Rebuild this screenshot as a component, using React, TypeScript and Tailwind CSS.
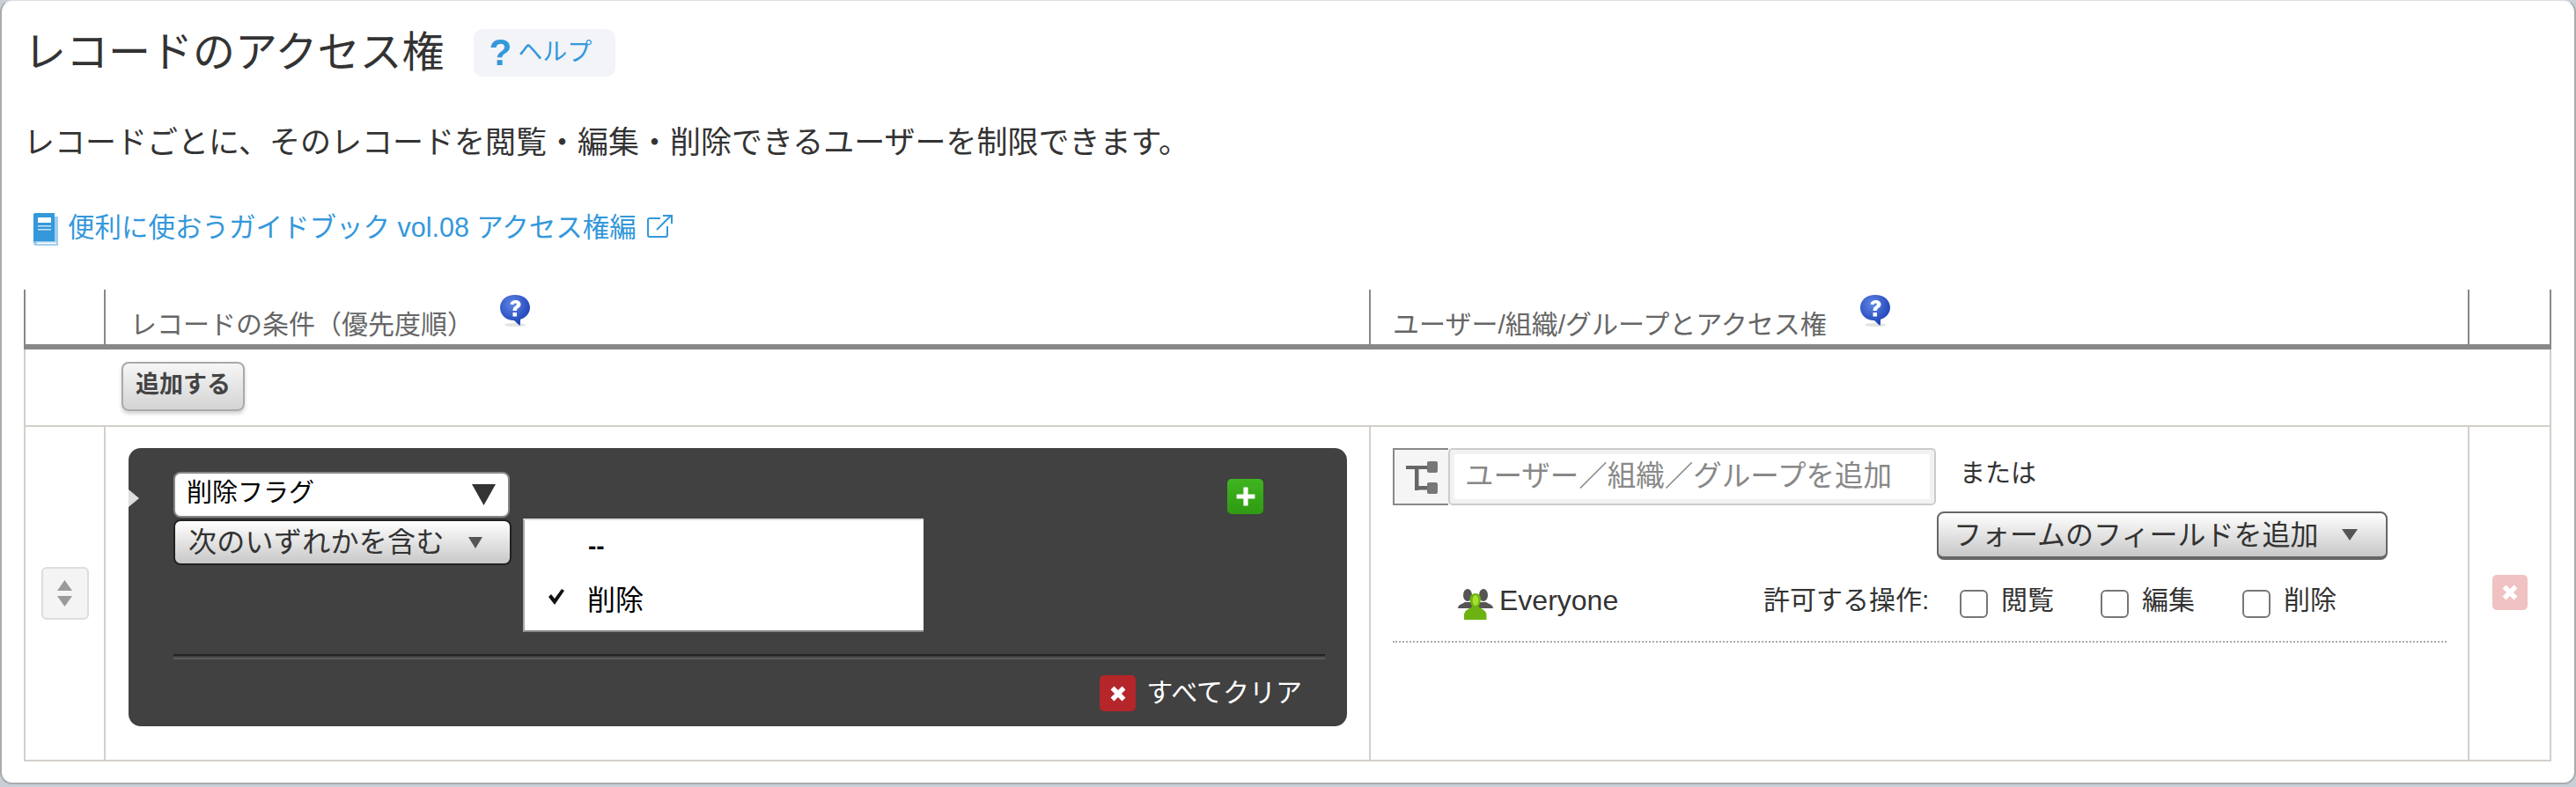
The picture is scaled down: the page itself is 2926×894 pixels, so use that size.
import type { ReactNode } from 'react'

const HelpBubble = ({ className }: { className: string }) => (
	<svg viewBox="0 0 36 38" className={className}>
		<defs>
			<radialGradient id="bubble" cx="40%" cy="30%" r="70%">
				<stop offset="0%" stopColor="#5f86e6" />
				<stop offset="100%" stopColor="#1b3fb4" />
			</radialGradient>
		</defs>
		<ellipse cx="18" cy="35" rx="12" ry="2" fill="#e4e4e4" />
		<path
			d="M18 1C8 1 1 7 1 15.500S8 30 17 30c2 2 4 4 6.500 6 .5-2 .8-5 .5-7 6-2 11-7 11-13.500C35 7 28 1 18 1z"
			fill="url(#bubble)"
		/>
		<path
			d="M12.500 11.500c.5-3 3-4.500 6-4.500 3.500 0 6 2 6 4.800 0 2.200-1.200 3.300-2.800 4.300-1.200.8-1.700 1.400-1.700 2.900h-4.500c0-2.800.8-4 2.500-5.200 1.200-.8 1.800-1.300 1.800-2 0-.8-.7-1.300-1.600-1.300-1 0-1.700.6-1.900 1.700z"
			fill="#fff"
		/>
		<rect x="15.500" y="21" width="4.500" height="4.500" fill="#fff" />
	</svg>
)

const BookIcon = () => (
	<svg viewBox="0 0 28 37" className="h-[37px] w-[28px] shrink-0">
		<path d="M24 4h4v33H3a3 3 0 0 1-3-3v-2h24z" fill="#9fcdee" />
		<path d="M2 0h22v32H2a2 2 0 0 0-2 2V2a2 2 0 0 1 2-2z" fill="#3498db" />
		<rect x="4" y="33.500" width="22" height="1.500" fill="#fff" />
		<rect x="5" y="5" width="15" height="6" fill="#fff" />
		<rect x="5" y="14" width="15" height="1.500" fill="#cfe5f6" />
		<rect x="5" y="18" width="15" height="1.500" fill="#cfe5f6" />
	</svg>
)

const ExternalIcon = () => (
	<svg
		viewBox="0 0 29 26"
		fill="none"
		stroke="#3498db"
		strokeWidth="2"
		className="mb-[6px] ml-[12px] h-[26px] w-[29px] shrink-0"
	>
		<path d="M15 4H3a2 2 0 0 0-2 2v17a2 2 0 0 0 2 2h18a2 2 0 0 0 2-2V13" />
		<path d="M11 17L27 1M18 1h10v9" />
	</svg>
)

const TreeIcon = () => (
	<svg viewBox="0 0 36 38" className="h-[38px] w-[36px]">
		<g fill="#666">
			<rect x="0" y="6" width="28" height="4" />
			<rect x="10" y="6" width="4.500" height="28" />
			<rect x="10" y="29" width="20" height="4.500" />
			<rect x="24" y="1" width="12" height="13" rx="2" fill="#777" />
			<rect x="24" y="25" width="12" height="13" rx="2" fill="#777" />
		</g>
	</svg>
)

const PeopleIcon = () => (
	<svg viewBox="0 0 40 36" className="h-[36px] w-[40px] shrink-0">
		<g fill="#555">
			<ellipse cx="11" cy="8" rx="5" ry="7" />
			<ellipse cx="29" cy="8" rx="5" ry="7" />
			<path d="M0 23c0-4 5-5 8-7h6c3 2 6 3 6 7z" />
			<path d="M20 23c0-4 3-5 6-7h6c3 2 8 3 8 7z" />
		</g>
		<path
			d="M20 6c4 0 6 3 6 7 0 4-2 6-2.500 8 1 2 8 3 9 9v6H7v-6c1-6 8-7 9-9-.5-2-2.500-4-2.500-8 0-4 2.500-7 6.500-7z"
			fill="#6cb312"
		/>
		<ellipse cx="20" cy="14" rx="3.500" ry="6" fill="#a5e02e" />
	</svg>
)

const CrossGlyph = () => (
	<svg viewBox="0 0 20 20" className="h-[26px] w-[26px]">
		<path
			d="M3.500 6.500l3-3L10 7l3.500-3.500 3 3L13 10l3.500 3.500-3 3L10 13l-3.500 3.500-3-3L7 10z"
			fill="#fff"
		/>
	</svg>
)

const Triangle = ({ className }: { className: string }) => (
	<svg viewBox="0 0 10 10" preserveAspectRatio="none" className={className}>
		<path d="M0 0h10L5 10z" fill="currentColor" />
	</svg>
)

const Checkbox = () => (
	<span className="h-[32px] w-[32px] shrink-0 rounded-[6px] border-2 border-[#777] bg-white" />
)

const Permission = ({ label, className }: { label: string; className: string }) => (
	<label className={`flex items-center ${className}`}>
		<Checkbox />
		<span className="ml-[15px] -translate-y-[4px]">{label}</span>
	</label>
)

const HeadCell = ({ children, className }: { children?: ReactNode; className: string }) => (
	<div className={`relative h-full text-[30px] leading-[40px] text-[#666] ${className}`}>
		{children}
	</div>
)

export default function App() {
	return (
		<div
			className="h-[894px] w-full overflow-hidden bg-[#c9cfd6] text-[#333]"
			style={{ fontFamily: '"Liberation Sans", "Noto Sans CJK JP", sans-serif' }}
		>
			<div className="h-[891px] w-full rounded-[14px] border-x-2 border-b-2 border-t border-x-[#aaa] border-b-[#aaa] border-t-[#ddd] bg-white pt-[31px] pl-[25px] pr-[26px]">
				{/* Title */}
				<div className="flex items-center">
					<h1 className="text-[48px] leading-[56px] font-normal text-[#333]">
						レコードのアクセス権
					</h1>
					<a className="ml-[33px] flex h-[54px] w-[161px] items-center rounded-[10px] bg-[#f2f4f7] pl-[18px] text-[28px] text-[#3498db]">
						<span className="mr-[7px] text-[42px] leading-none font-bold">?</span>
						ヘルプ
					</a>
				</div>

				<p className="mt-[49px] text-[35px] leading-[50px] text-[#333]">
					レコードごとに、そのレコードを閲覧・編集・削除できるユーザーを制限できます。
				</p>

				<a className="mt-[51px] ml-[11px] flex h-[44px] items-center text-[30.500px] text-[#3498db]">
					<BookIcon />
					<span className="ml-[11px] -translate-y-[1px]">便利に使おうガイドブック vol.08 アクセス権編</span>
					<ExternalIcon />
				</a>

				{/* Table */}
				<div className="mt-[47px] w-[2871px]">
					<div className="flex h-[68px] border-b-[6px] border-[#888]">
						<HeadCell className="w-[93px] border-x-2 border-[#888]" />
						<HeadCell className="w-[1437px] border-r-2 border-[#888] pt-[20px] pl-[28px]">
							レコードの条件（優先度順）
							<HelpBubble className="absolute top-[5px] left-[447px] h-[38px] w-[36px]" />
						</HeadCell>
						<HeadCell className="w-[1248px] border-r-2 border-[#888] pt-[20px] pl-[25px]">
							ユーザー/組織/グループとアクセス権
							<HelpBubble className="absolute top-[5px] left-[555px] h-[38px] w-[36px]" />
						</HeadCell>
						<HeadCell className="flex-1 border-r-2 border-[#888]" />
					</div>

					<div className="flex h-[88px] items-start border-x-2 border-b-2 border-[#d3cfca] pt-[14px] pl-[109px]">
						<button className="h-[56px] w-[140px] rounded-[8px] border-2 border-[#aaa] bg-gradient-to-b from-[#f6f6f6] to-[#d4d4d4] pb-[3px] text-[27px] font-bold text-[#444] shadow-[0_3px_4px_rgba(0,0,0,0.18)]">
							追加する
						</button>
					</div>

					<div className="flex h-[380px] border-x-2 border-b-2 border-[#d3cfca]">
						{/* Sort handle */}
						<div className="flex w-[91px] shrink-0 items-center justify-center border-r-2 border-[#d3cfca]">
							<div className="flex h-[60px] w-[54px] flex-col items-center justify-center gap-[6px] rounded-[6px] border-2 border-[#ddd] bg-[#f4f4f4] text-[#9a9a9a]">
								<Triangle className="h-[12px] w-[17px] rotate-180" />
								<Triangle className="h-[12px] w-[17px]" />
							</div>
						</div>

						{/* Conditions */}
						<div className="w-[1437px] shrink-0 border-r-2 border-[#d3cfca] pt-[24px] pl-[26px]">
							<div className="relative h-[316px] w-[1384px] rounded-[14px] bg-[#414141] pt-[27px] pl-[51px] pr-[26px]">
								<div className="absolute top-[47px] left-0 h-0 w-0 border-y-[10px] border-l-[12px] border-y-transparent border-l-[#ddd]" />
								<div className="flex h-[207px] items-start justify-between">
									<div>
										<div className="flex h-[52px] w-[382px] items-center justify-between rounded-[8px] border-2 border-[#888] bg-white pr-[14px] pl-[13px] text-[29px] text-black">
											<span className="-translate-y-[1px]">削除フラグ</span>
											<Triangle className="h-[24px] w-[27px] text-[#333]" />
										</div>
										<div className="mt-[2px] flex h-[52px] w-[384px] items-center rounded-[8px] border-2 border-[#222] bg-gradient-to-b from-white to-[#c8c8c8] pl-[15px] text-[32px] text-[#333]">
											<span className="tracking-[0.3px]">次のいずれかを含む</span>
											<Triangle className="ml-[27px] h-[13px] w-[16px] text-[#555]" />
										</div>
									</div>
									<span className="mt-[8px] mr-[69px] flex h-[40px] w-[41px] items-center justify-center rounded-[5px] bg-gradient-to-b from-[#3fb51f] to-[#2f9a12]">
										<svg viewBox="0 0 20 20" className="h-[26px] w-[26px]">
											<path d="M8 2h4v6h6v4h-6v6H8v-6H2V8h6z" fill="#fff" />
										</svg>
									</span>
								</div>

								{/* Open dropdown */}
								<div className="absolute top-[80px] left-[448px] h-[129px] w-[455px] border-t-2 border-b-2 border-l-2 border-t-[#ddd] border-b-[#888] border-l-[#aaa] bg-white text-[32px] text-black">
									<div className="flex h-[60px] items-center pl-[72px] text-[28px] font-bold">--</div>
									<div className="flex h-[54px] items-center pl-[26px]">
										<svg viewBox="0 0 20 20" className="h-[20px] w-[20px]">
											<path d="M1 10l3-3 4 5 8-11 3 2-11 16z" fill="#111" />
										</svg>
										<span className="ml-[25px] translate-y-[4px]">削除</span>
									</div>
								</div>

								<div className="h-[6px] w-[1308px] border-t-2 border-b-2 border-t-[#222] border-b-[#5c5c5c]" />
								<div className="mt-[18px] flex items-center justify-end pr-[25px] text-[30px] leading-[40px] text-white">
									<span className="mr-[12px] flex h-[41px] w-[41px] items-center justify-center rounded-[5px] bg-[#b4262a]">
										<CrossGlyph />
									</span>
									<span className="-translate-y-[1px]">すべてクリア</span>
								</div>
							</div>
						</div>

						{/* Users */}
						<div className="w-[1248px] shrink-0 border-r-2 border-[#d3cfca] pt-[24px] pl-[25px] text-[30px]">
							<div className="flex h-[65px] items-start">
								<div className="flex h-[65px] w-[63px] items-center justify-center border-y-2 border-l-2 border-[#888] bg-[#f5f5f5]">
									<TreeIcon />
								</div>
								<div className="flex h-[65px] w-[554px] items-center rounded-[5px] border-2 border-[#ccc] bg-white pb-[1px] pl-[17px] text-[32.500px] text-[#888] shadow-[inset_0_0_0_5px_#f2f2f2]">
									ユーザー／組織／グループを追加
								</div>
								<span className="ml-[27px] text-[29px] leading-[58px] text-[#333]">または</span>
							</div>
							<button className="mt-[7px] ml-[618px] flex h-[55px] w-[512px] items-center rounded-[8px] border-2 border-b-[4px] border-[#666] bg-gradient-to-b from-white to-[#c8c8c8] pl-[17px] text-[32px] text-[#333]">
								フォームのフィールドを追加
								<Triangle className="ml-[27px] h-[13px] w-[18px] text-[#555]" />
							</button>
							<div className="mt-[31px] flex h-[38px] w-[1197px] items-center pl-[74px] leading-[38px]">
								<PeopleIcon />
								<span className="ml-[7px] w-[300px] -translate-y-[4px] text-[32px] text-[#333]">Everyone</span>
								<span className="w-[223px] -translate-y-[4px]">許可する操作:</span>
								<Permission label="閲覧" className="w-[160px]" />
								<Permission label="編集" className="w-[161px]" />
								<Permission label="削除" className="w-[120px]" />
							</div>
							<div className="mt-[23px] w-[1197px] border-t-2 border-dotted border-[#aaa]" />
						</div>

						{/* Delete */}
						<div className="flex flex-1 items-center justify-center">
							<span className="mt-[-2px] flex h-[40px] w-[40px] items-center justify-center rounded-[5px] bg-[#f0c2c2]">
								<CrossGlyph />
							</span>
						</div>
					</div>
				</div>
			</div>
		</div>
	)
}
